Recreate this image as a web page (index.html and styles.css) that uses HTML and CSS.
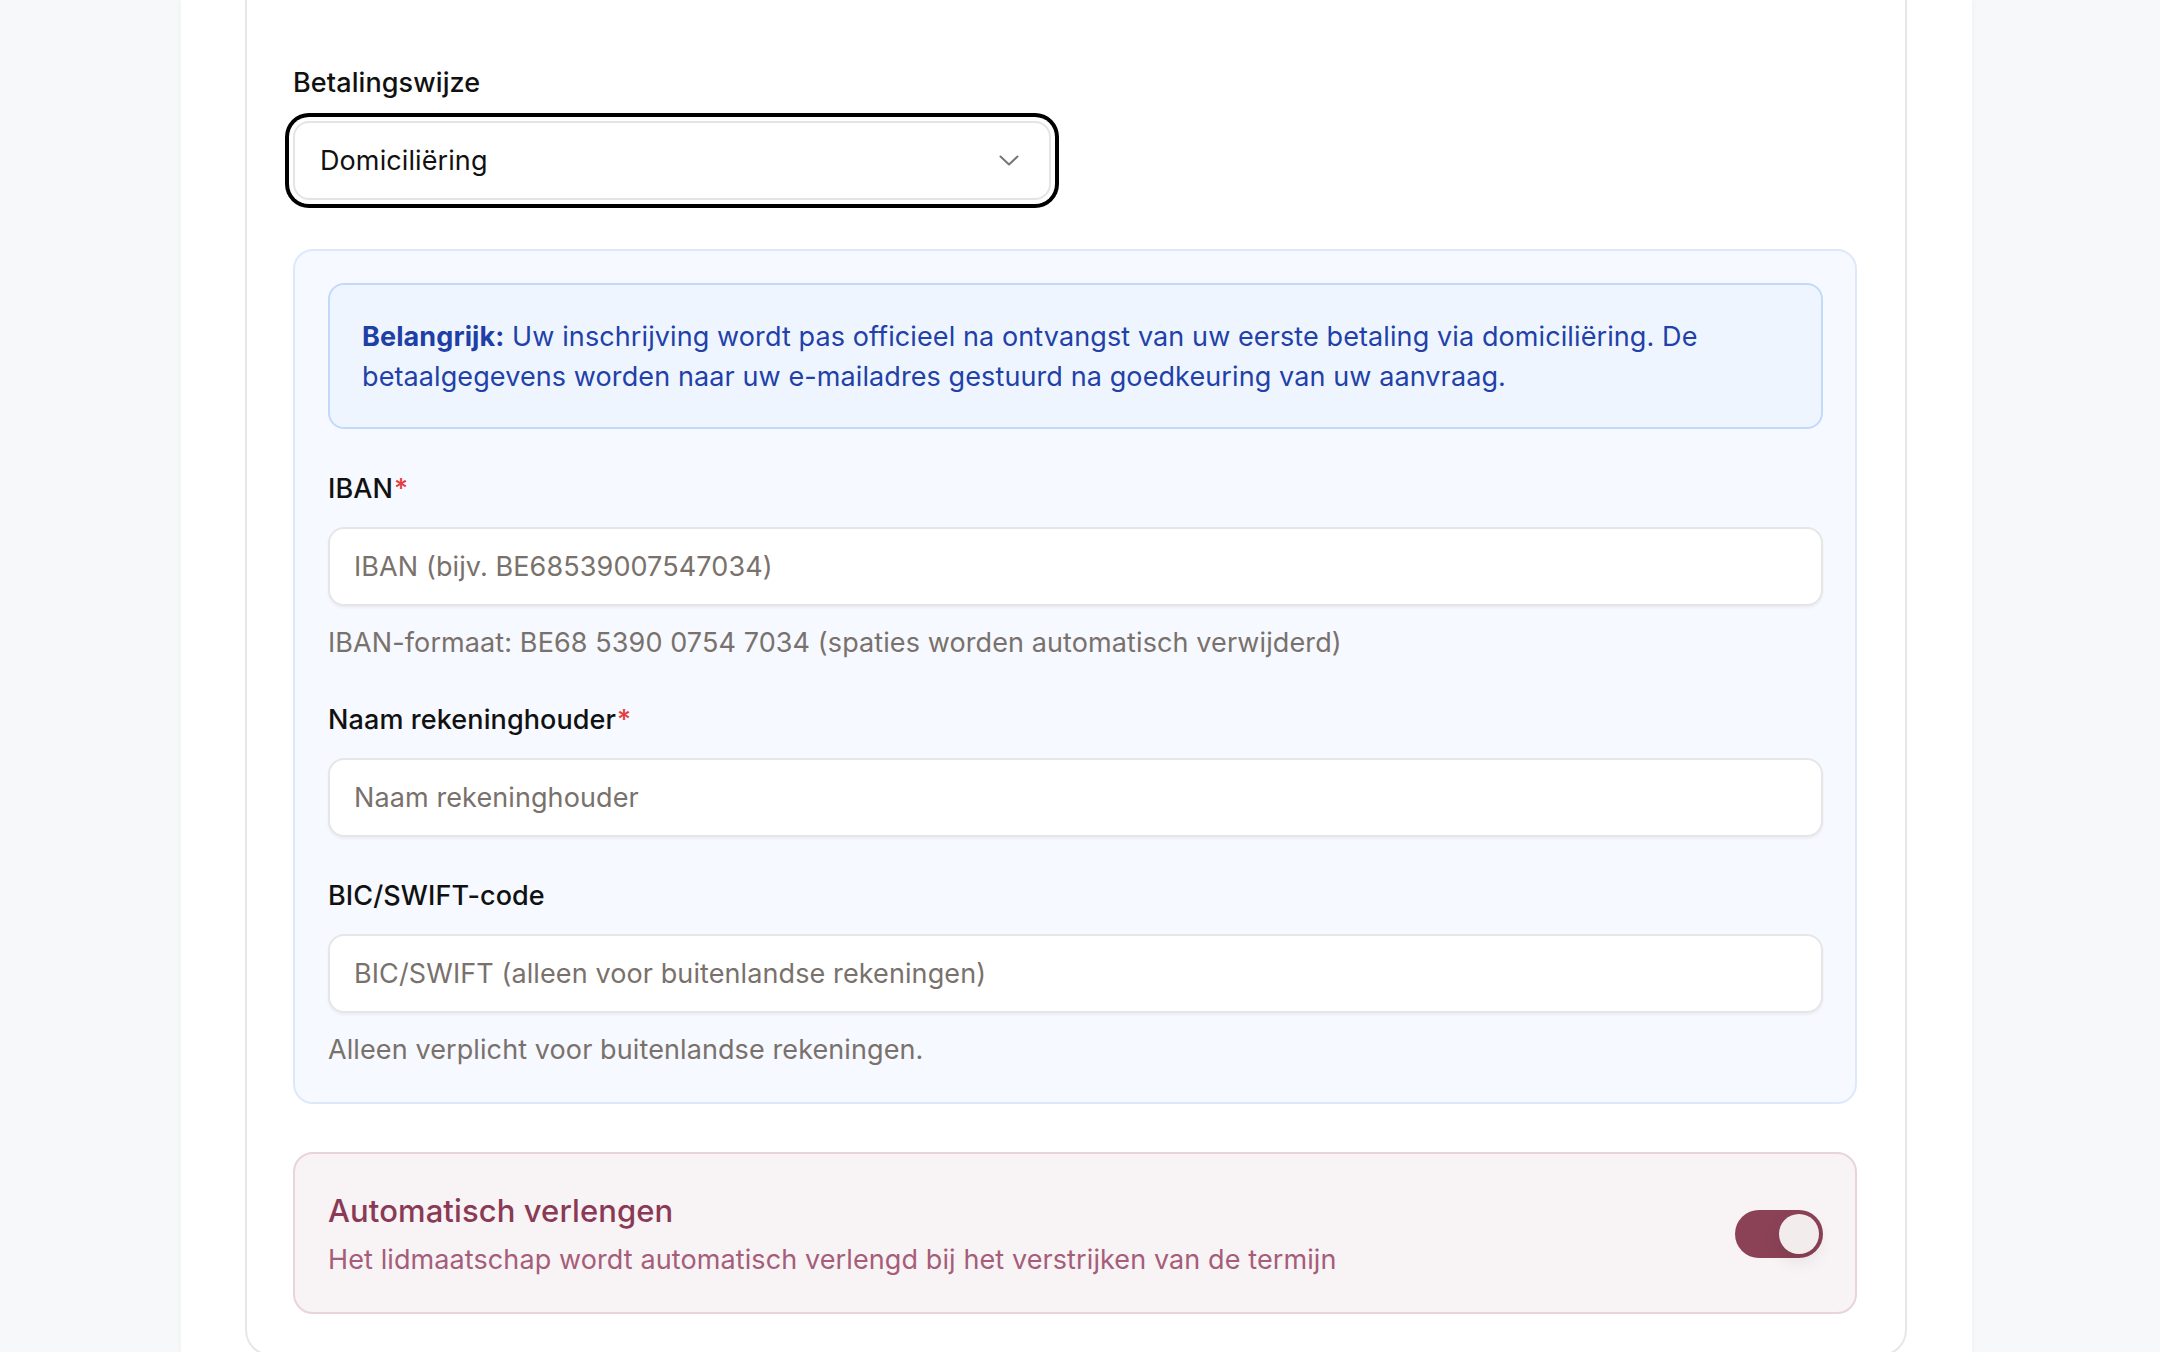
FILE: index.html
```html
<!DOCTYPE html>
<html lang="nl">
<head>
<meta charset="utf-8">
<title>Betalingswijze</title>
<link rel="stylesheet" href="styles.css">
</head>
<body>
<div class="page">
  <div class="card">
    <div class="row-2">
      <div class="field">
        <label class="label">Betalingswijze</label>
        <div class="select focused">
          <span class="select-value">Domiciliëring</span>
          <svg class="chevron" viewBox="0 0 20 11" width="20" height="11" aria-hidden="true"><path d="M1.5 1.5 L10 9.5 L18.5 1.5" fill="none" stroke="#767676" stroke-width="2" stroke-linecap="round" stroke-linejoin="round"/></svg>
        </div>
      </div>
      <div></div>
    </div>

    <div class="bank-panel">
      <div class="notice"><strong>Belangrijk:</strong> Uw inschrijving wordt pas officieel na ontvangst van uw eerste betaling via domiciliëring. De betaalgegevens worden naar uw e-mailadres gestuurd na goedkeuring van uw aanvraag.</div>

      <div class="group">
        <label class="label">IBAN<span class="req">*</span></label>
        <div class="input"><span class="ph">IBAN (bijv. BE68539007547034)</span></div>
        <p class="help">IBAN-formaat: BE68 5390 0754 7034 (spaties worden automatisch verwijderd)</p>
      </div>

      <div class="group">
        <label class="label">Naam rekeninghouder<span class="req">*</span></label>
        <div class="input"><span class="ph">Naam rekeninghouder</span></div>
      </div>

      <div class="group group-after-input">
        <label class="label">BIC/SWIFT-code</label>
        <div class="input"><span class="ph">BIC/SWIFT (alleen voor buitenlandse rekeningen)</span></div>
        <p class="help">Alleen verplicht voor buitenlandse rekeningen.</p>
      </div>
    </div>

    <div class="renew">
      <div class="renew-text">
        <div class="renew-title">Automatisch verlengen</div>
        <div class="renew-sub">Het lidmaatschap wordt automatisch verlengd bij het verstrijken van de termijn</div>
      </div>
      <div class="toggle on"><span class="knob"></span></div>
    </div>
  </div>
</div>
</body>
</html>
```

FILE: styles.css
```css
* { box-sizing: border-box; }
html, body { margin: 0; padding: 0; }
body {
  background: #f7f8fa;
  font-family: Inter, "Noto Sans", "Liberation Sans", sans-serif;
  color: #111111;
  height: 1352px;
  overflow: hidden;
  letter-spacing: 0.1px;
}
.page {
  margin-left: 181px;
  width: 1791px;
  min-height: 1352px;
  background: #ffffff;
  box-shadow: 0 0 6px rgba(0,0,0,0.04);
  padding-left: 64px;
}
.card {
  width: 1662px;
  border: 2px solid #e6e7ea;
  border-top: none;
  border-radius: 0 0 26px 26px;
  padding: 63px 48px 40px 46px;
  min-height: 1352px;
}
.row-2 {
  display: grid;
  grid-template-columns: 1fr 1fr;
  column-gap: 48px;
}
.label {
  display: block;
  font-size: 27px;
  line-height: 40px;
  font-weight: 500;
  color: #111;
  margin-bottom: 18px;
}
.req { color: #e53e3e; margin-left: 1px; }
.select {
  height: 79px;
  border: 2px solid #e4e4e4;
  border-radius: 16px;
  background: #fff;
  display: flex;
  align-items: center;
  justify-content: space-between;
  padding: 0 30px 0 25px;
}
.select.focused {
  box-shadow: 0 0 0 4px #ffffff, 0 0 0 8px #000000;
}
.select-value {
  font-size: 27px;
  color: #111;
}
.chevron { display: block; }
.bank-panel {
  margin-top: 49px;
  background: #f6f9ff;
  border: 2px solid #dde9fb;
  border-radius: 20px;
  padding: 32px 32px 32px 33px;
}
.notice {
  background: #eff5ff;
  border: 2px solid #c3d9fb;
  border-radius: 16px;
  padding: 32px 32px 30px 32px;
  color: #2141a8;
  font-size: 27px;
  line-height: 40px;
}
.notice strong { font-weight: 700; color: #1e3fa6; }
.group { margin-top: 40px; }
.group + .group { margin-top: 37px; }
.group + .group-after-input { margin-top: 39px; }
.input {
  height: 79px;
  border: 2px solid #e6e6e6;
  border-radius: 16px;
  background: #fff;
  box-shadow: 0 2px 3px rgba(0,0,0,0.05);
  display: flex;
  align-items: center;
  padding-left: 24px;
}
.ph {
  font-size: 27px;
  color: #79716c;
}
.help {
  margin: 17px 0 0 0;
  font-size: 27px;
  line-height: 40px;
  color: #79716c;
}
.renew {
  margin-top: 48px;
  background: #f8f3f5;
  border: 2px solid #e8d4db;
  border-radius: 20px;
  padding: 34px 32px 32px 33px;
  display: flex;
  align-items: center;
  justify-content: space-between;
}
.renew-title {
  font-size: 31px;
  line-height: 46px;
  font-weight: 500;
  color: #8a3a55;
}
.renew-sub {
  margin-top: 6px;
  font-size: 27px;
  line-height: 40px;
  color: #a65d79;
}
.toggle {
  width: 88px;
  height: 48px;
  border-radius: 24px;
  background: #8b4257;
  padding: 4px;
  display: flex;
  justify-content: flex-end;
}
.knob {
  width: 40px;
  height: 40px;
  border-radius: 50%;
  background: #f3eced;
  box-shadow: 0 8px 18px rgba(0,0,0,0.08);
}
```
